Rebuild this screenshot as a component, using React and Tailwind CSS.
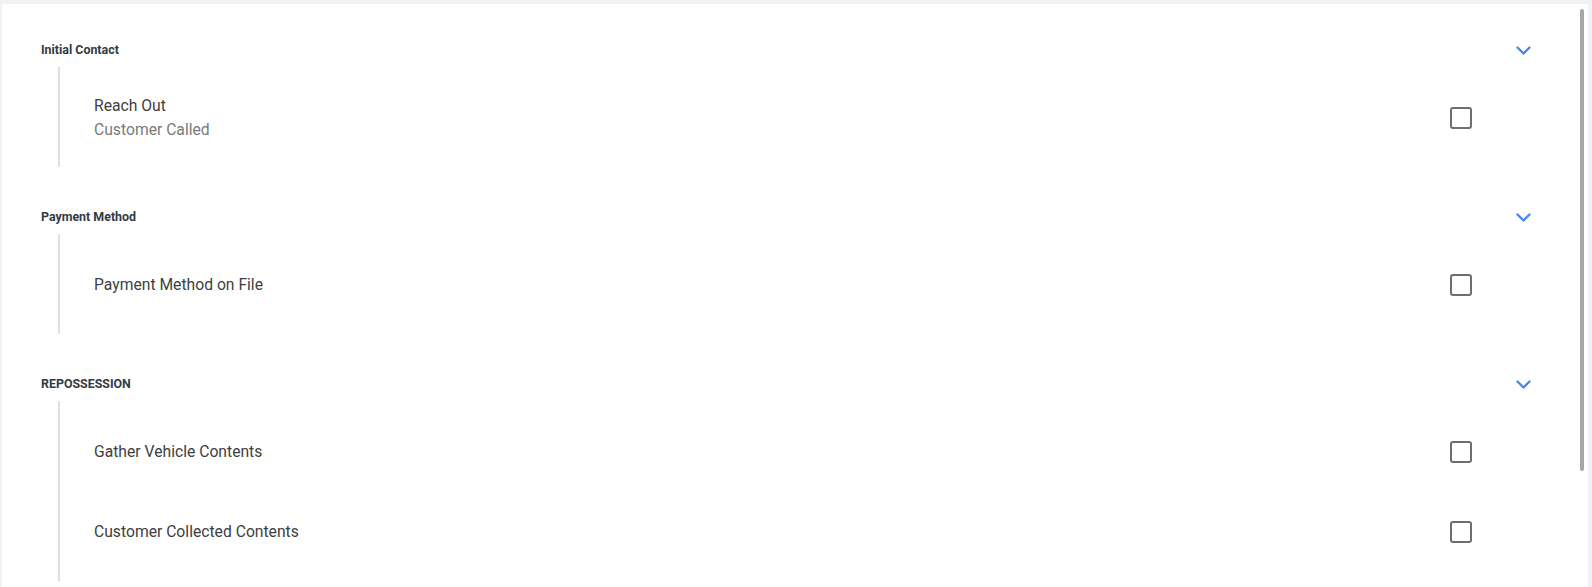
import React from "react";

const SECTIONS = [
  {
    title: "Initial Contact",
    items: [{ label: "Reach Out", sub: "Customer Called" }],
  },
  {
    title: "Payment Method",
    items: [{ label: "Payment Method on File" }],
  },
  {
    title: "REPOSSESSION",
    items: [
      { label: "Gather Vehicle Contents" },
      { label: "Customer Collected Contents" },
    ],
  },
];

function Chevron() {
  return (
    <svg width="15" height="9" viewBox="0 0 15 9" fill="none" className="mr-[1px]">
      <path
        d="M1.5 1.5l6 6 6-6"
        stroke="#4a86f0"
        strokeWidth="2.4"
        strokeLinecap="round"
        strokeLinejoin="round"
      />
    </svg>
  );
}

function Section({ title, items }) {
  return (
    <div>
      <div className="flex h-[34px] items-center justify-between">
        <p className="text-[12.4px] font-bold text-[#323a46]">{title}</p>
        <Chevron />
      </div>
      <div className="ml-[17px] border-l-2 border-[#e0e0e0] pb-[9px] pt-[11px]">
        {items.map((item) => (
          <div
            key={item.label}
            className="flex h-[80px] items-center justify-between pl-[34px] pr-[60px]"
          >
            <div className="text-[15.7px] leading-6">
              <p className="text-[#404040]">{item.label}</p>
              {item.sub && <p className="text-[#7a7a7a]">{item.sub}</p>}
            </div>
            <div className="h-[22px] w-[22px] rounded-[3px] border-2 border-[#6e6e6e]" />
          </div>
        ))}
      </div>
    </div>
  );
}

export default function App() {
  return (
    <div
      className="h-[587px] overflow-hidden bg-[#f0f2f5] pl-[2px] pr-[4px] pt-[4px]"
      style={{ fontFamily: "Roboto, 'Noto Sans', sans-serif" }}
    >
      <div className="relative h-[583px] overflow-hidden bg-white">
        <div className="absolute right-[4px] top-[5px] h-[462px] w-[4px] rounded-full bg-[#a6a6a6]" />
        <div className="flex flex-col gap-[33px] pl-[39px] pr-[56px] pt-[29px]">
          {SECTIONS.map((s) => (
            <Section key={s.title} title={s.title} items={s.items} />
          ))}
        </div>
      </div>
    </div>
  );
}
